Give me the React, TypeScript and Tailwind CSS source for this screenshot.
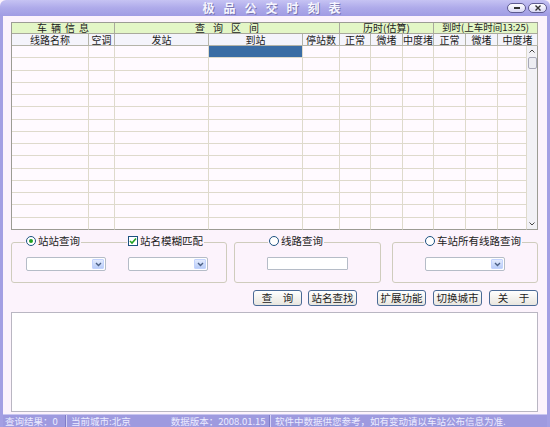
import React from "react";

const FONT = "font-['Noto_Sans_CJK_SC','Noto_Sans',sans-serif]";

function Radio({ checked }: { checked?: boolean }) {
  return (
    <span className="flex h-[10px] w-[10px] items-center justify-center rounded-full border border-[#1c5180] bg-white">
      {checked && <span className="h-[4px] w-[4px] rounded-full bg-[#21a121]" />}
    </span>
  );
}

function Check() {
  return (
    <span className="flex h-[10px] w-[10px] items-center justify-center border border-[#1c5180] bg-white">
      <svg width="8" height="8" viewBox="0 0 8 8">
        <path d="M1 4 L3 6 L7 1.5" fill="none" stroke="#21a121" strokeWidth="1.6" />
      </svg>
    </span>
  );
}

function Select() {
  return (
    <div className="flex h-[14px] w-[80px] items-stretch rounded-[2px] border border-[#b5bcc7] bg-white p-[1px]">
      <div className="flex-1" />
      <div className="flex w-[12px] items-center justify-center rounded-[1px] border border-[#c3d3fd] bg-gradient-to-b from-[#e3ebfd] to-[#b9cdf8]">
        <svg width="7" height="5" viewBox="0 0 7 5">
          <path d="M1 1 L3.5 3.5 L6 1" fill="none" stroke="#4d6185" strokeWidth="1.4" />
        </svg>
      </div>
    </div>
  );
}

function Btn({ label }: { label: string }) {
  return (
    <div className="flex h-[16px] w-[49px] items-center justify-center rounded-[3px] border border-[#4a6a96] bg-gradient-to-b from-white to-[#e8e6df] text-[10.5px] leading-none text-[#222] whitespace-nowrap">
      {label}
    </div>
  );
}

export default function App() {
  const h2 = [
    "线路名称",
    "空调",
    "发站",
    "到站",
    "停站数",
    "正常",
    "微堵",
    "中度堵",
    "正常",
    "微堵",
    "中度堵",
  ];
  const rows = Array.from({ length: 15 });
  return (
    <div className={`flex h-[427px] w-[550px] flex-col overflow-hidden bg-[#fcf3fc] ${FONT}`}>
      {/* Title bar */}
      <div className="relative flex h-[16px] shrink-0 items-center justify-center rounded-t-[6px] bg-gradient-to-b from-[#c6c3f3] via-[#aeaaea] to-[#a09ce3]">
        <span className="pl-[2px] text-[12px] font-bold leading-none tracking-[9px] text-[#f6f6ff] [text-shadow:1px_1px_0_#7a76b0]">
          极品公交时刻表
        </span>
        <div className="absolute right-[3px] top-[3px] flex gap-[2px]">
          <div className="flex h-[10px] w-[19px] items-center justify-center rounded-full border border-[#5d5a90] bg-gradient-to-b from-white to-[#d9d7f5]">
            <span className="h-[2px] w-[6px] bg-[#333]" />
          </div>
          <div className="flex h-[10px] w-[19px] items-center justify-center rounded-full border border-[#5d5a90] bg-gradient-to-b from-white to-[#d9d7f5]">
            <svg width="6" height="6" viewBox="0 0 6 6">
              <path d="M0.5 0.5 L5.5 5.5 M5.5 0.5 L0.5 5.5" stroke="#333" strokeWidth="1.4" />
            </svg>
          </div>
        </div>
      </div>

      {/* Body */}
      <div className="flex flex-1 flex-col border-x-[3px] border-[#a39fe3]">
        <div className="flex flex-col pl-[8px] pr-[9px] pt-[6px]">
          {/* Table */}
          <div className="flex w-[527px] flex-col border-l border-t border-[#9c9c94] text-[10px] leading-none text-[#222]">
            <div className="grid h-[11px] grid-cols-[103px_225px_94px_104px] bg-[#e3f6c6]">
              <div className="flex items-center justify-center border-b border-r border-[#a9a99c] pl-[4px] tracking-[4px]">车辆信息</div>
              <div className="flex items-center justify-center border-b border-r border-[#a9a99c] pl-[8px] tracking-[8px]">查询区间</div>
              <div className="flex items-center justify-center border-b border-r border-[#a9a99c] whitespace-nowrap">历时(估算)</div>
              <div className="flex items-center justify-center border-b border-r border-[#a9a99c] whitespace-nowrap text-[9.5px]">到时(上车时间13:25)</div>
            </div>
            <div className="grid h-[12px] grid-cols-[77px_26px_94px_94px_37px_31px_32px_31px_32px_32px_40px] bg-[#f4f4fb]">
              {h2.map((t, i) => (
                <div key={i} className="flex items-center justify-center border-b border-r border-[#b4b4a8] whitespace-nowrap">
                  {t}
                </div>
              ))}
            </div>
            <div className="flex h-[184px]">
              <div className="grid w-[515px] grid-cols-[77px_26px_94px_94px_37px_31px_32px_31px_32px_32px_29px] grid-rows-[repeat(15,minmax(0,1fr))] bg-[#fffaff]">
                {rows.map((_, r) =>
                  h2.map((_, c) => (
                    <div
                      key={`${r}-${c}`}
                      className={`border-r border-b ${r === 14 ? "border-b-[#9c9c94]" : "border-b-[#dedacc]"} border-r-[#dedacc] ${r === 0 && c === 3 ? "bg-[#3a6da5]" : ""}`}
                    />
                  ))
                )}
              </div>
              <div className="flex w-[12px] flex-col items-center border-b border-r border-[#9c9c94] bg-[#f2f1f6] pt-[3px]">
                <svg width="6" height="4" viewBox="0 0 6 4">
                  <path d="M0.5 3.5 L3 1 L5.5 3.5" fill="none" stroke="#444" strokeWidth="1" />
                </svg>
                <div className="mt-[4px] h-[12px] w-[9px] rounded-[2px] border border-[#a8a8b8] bg-[#ededf3]" />
                <div className="flex-1" />
                <svg className="mb-[3px]" width="6" height="4" viewBox="0 0 6 4">
                  <path d="M0.5 0.5 L3 3 L5.5 0.5" fill="none" stroke="#444" strokeWidth="1" />
                </svg>
              </div>
            </div>
          </div>

          {/* Group boxes */}
          <div className="mt-[12px] flex text-[10.5px] leading-none text-[#222]">
            <div className="relative h-[41px] w-[216px] rounded-[3px] border border-[#cfccbd]">
              <div className="absolute left-[13px] top-[-7px] flex items-center gap-[2px] whitespace-nowrap bg-[#fcf3fc] px-[1px]">
                <Radio checked />
                <span>站站查询</span>
              </div>
              <div className="absolute left-[115px] top-[-7px] flex items-center gap-[2px] whitespace-nowrap bg-[#fcf3fc] px-[1px]">
                <Check />
                <span>站名模糊匹配</span>
              </div>
              <div className="ml-[14px] mt-[14px] flex gap-[22px]">
                <Select />
                <Select />
              </div>
            </div>
            <div className="relative ml-[7px] h-[41px] w-[147px] rounded-[3px] border border-[#cfccbd]">
              <div className="absolute left-[33px] top-[-7px] flex items-center gap-[2px] whitespace-nowrap bg-[#fcf3fc] px-[1px]">
                <Radio />
                <span>线路查询</span>
              </div>
              <div className="ml-[32px] mt-[14px] h-[13px] w-[81px] rounded-[1px] border border-[#b5bcc7] bg-white" />
            </div>
            <div className="relative ml-[11px] h-[41px] w-[146px] rounded-[3px] border border-[#cfccbd]">
              <div className="absolute left-[31px] top-[-7px] flex items-center gap-[2px] whitespace-nowrap bg-[#fcf3fc] px-[1px]">
                <Radio />
                <span>车站所有线路查询</span>
              </div>
              <div className="ml-[32px] mt-[14px]">
                <Select />
              </div>
            </div>
          </div>

          {/* Buttons */}
          <div className="mt-[7px] flex w-[527px] justify-end">
            <div className="flex gap-[6px]">
              <Btn label="查　询" />
              <Btn label="站名查找" />
            </div>
            <div className="ml-[20px] flex gap-[7px]">
              <Btn label="扩展功能" />
              <Btn label="切换城市" />
              <Btn label="关　于" />
            </div>
          </div>

          {/* Text area */}
          <div className="mt-[6px] h-[100px] w-[527px] border border-[#b9b6c2] bg-white" />
        </div>

        {/* Status bar */}
        <div className="mt-[2px] flex h-[14px] items-center border-t border-[#c9c6f0] bg-[#9e9adf] text-[9.5px] leading-none text-[#ececff] whitespace-nowrap">
          <div className="flex h-full w-[63px] items-center border-r border-[#7f7bc6] pl-[2px]">
            查询结果：0
          </div>
          <div className="flex h-full w-[204px] items-center border-l border-r border-l-[#d4d2f4] border-r-[#7f7bc6] pl-[4px]">
            <span>当前城市:北京</span>
            <span className="ml-[40px]">数据版本：2008.01.15</span>
          </div>
          <div className="flex h-full flex-1 items-center border-l border-[#d4d2f4] pl-[4px]">
            软件中数据供您参考，如有变动请以车站公布信息为准.
          </div>
        </div>
      </div>
    </div>
  );
}
